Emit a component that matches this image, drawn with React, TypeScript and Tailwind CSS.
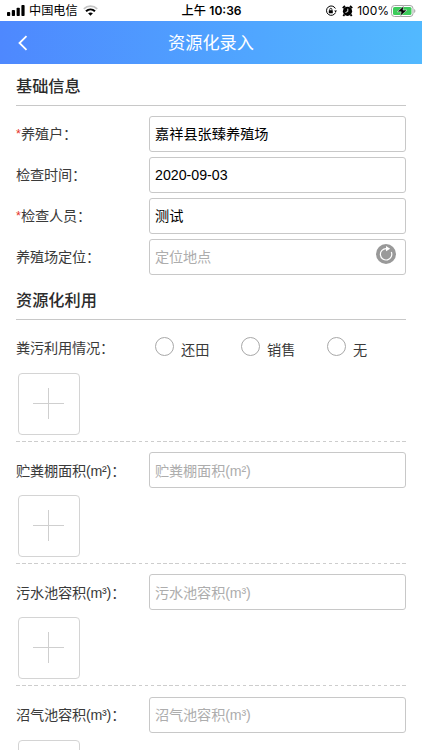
import React from "react";

const uploads = [
  { label: "贮粪棚面积(m²)" },
  { label: "污水池容积(m³)" },
  { label: "沼气池容积(m³)" },
];

function StatusBar() {
  return (
    <div className="flex h-[21px] items-center justify-between pl-[7px] pr-[6px] pt-px text-[12px] text-black">
      <div className="flex w-[150px] items-center">
        <svg width="18" height="11" viewBox="0 0 18 11" fill="#000">
          <rect x="0" y="7" width="3.2" height="4" rx="0.8" />
          <rect x="4.8" y="5" width="3.2" height="6" rx="0.8" />
          <rect x="9.6" y="2.7" width="3.2" height="8.3" rx="0.8" />
          <rect x="14.4" y="0" width="3.2" height="11" rx="0.8" />
        </svg>
        <span className="ml-[4px] pt-px text-[12.2px]">中国电信</span>
        <svg className="ml-[5px]" width="15" height="11" viewBox="0 0 15 11" fill="none">
          <path d="M0.8 3.8C4.6 0.2 10.4 0.2 14.2 3.8" stroke="#c4c4c4" strokeWidth="1.8" />
          <path d="M3 6.3C5.6 3.9 9.4 3.9 12 6.3" stroke="#000" strokeWidth="2.1" />
          <path d="M5.1 8.3C6.5 7.1 8.5 7.1 9.9 8.3L7.5 10.8Z" fill="#000" />
        </svg>
      </div>
      <span className="pt-px text-[12.2px] font-medium">
        上午 <span className="font-['Inter'] text-[12px] font-semibold">10:36</span>
      </span>
      <div className="flex w-[150px] items-center justify-end">
        <svg width="12" height="12" viewBox="0 0 12 12" fill="none">
          <path d="M10.4 3.5A4.7 4.7 0 1 0 10.5 7.6" stroke="#000" strokeWidth="1" />
          <path d="M9.2 5.4H12L10.6 7.6Z" fill="#000" />
          <rect x="3.8" y="5.2" width="4" height="3.1" rx="0.4" fill="#000" />
          <path d="M4.7 5.5V4.4A1.1 1.1 0 0 1 6.9 4.4V5.5" stroke="#000" strokeWidth="0.8" />
        </svg>
        <svg className="ml-[5px]" width="11" height="12" viewBox="0 0 11 12" fill="none">
          <circle cx="5.5" cy="6.3" r="4.6" fill="#000" />
          <path d="M0.8 3.1L3 1M10.2 3.1L8 1M2.3 9.7L1.3 11M8.7 9.7L9.7 11" stroke="#000" strokeWidth="1.9" />
          <path d="M5.8 3.7V6.5L3.5 7.5" stroke="#fff" strokeWidth="0.9" />
        </svg>
        <span className="ml-[4px] font-['Inter'] text-[12px]">100%</span>
        <svg className="ml-[2px]" width="25" height="12" viewBox="0 0 25 12">
          <rect x="0.5" y="0.5" width="21.5" height="11" rx="3" fill="#fff" stroke="#a5a5a5" />
          <rect x="2" y="2" width="18.5" height="8" rx="1.6" fill="#3ccb5a" />
          <path d="M23.2 4V8C24.8 7.4 24.8 4.6 23.2 4Z" fill="#a5a5a5" />
          <path d="M12.9 0.8L6.2 6.8H10.2L9.2 11.2L16 5.1H12Z" fill="#000" stroke="#fff" strokeWidth="0.5" />
        </svg>
      </div>
    </div>
  );
}

function Heading({ children }: { children: React.ReactNode }) {
  return (
    <h2 className="flex h-[42px] items-center border-b border-[#c8c8c8] pt-[4px] text-[16.2px] font-medium text-[#2b2b2b]">
      {children}
    </h2>
  );
}

function Row({ label, required, children }: { label: string; required?: boolean; children: React.ReactNode }) {
  return (
    <div className="flex h-9 items-center">
      <div className="flex w-[133px] shrink-0 items-center whitespace-nowrap pt-[2px] text-[14.2px] tracking-[-0.2px] text-[#3a3a3a]">
        {required && <span className="w-[5px] pb-px text-[12.5px] text-[#e5332a]">*</span>}
        <span>{label}：</span>
      </div>
      {children}
    </div>
  );
}

function Field({ value, placeholder, children }: { value?: string; placeholder?: string; children?: React.ReactNode }) {
  return (
    <div className="flex h-9 min-w-0 flex-1 items-center justify-between rounded-[3px] border border-[#c8c8c8] pl-[5px] pr-[9px] text-[14.2px] text-black">
      {value ? (
        <span className="pt-[2px]">{value}</span>
      ) : (
        <span className="pt-[2px] tracking-[-0.15px] text-[#adadad]">{placeholder}</span>
      )}
      {children}
    </div>
  );
}

function UploadBox() {
  return (
    <div className="ml-[2px] mt-[7px] flex size-[62px] items-center justify-center rounded-[4px] border border-[#d4d4d4]">
      <svg width="32" height="32" viewBox="0 0 32 32" stroke="#cfcfcf">
        <path d="M15.5 0V31M0 15.5H31" />
      </svg>
    </div>
  );
}

function DashedLine() {
  return (
    <div className="mt-[6px] h-px bg-[repeating-linear-gradient(90deg,#cdcdcd_0_3.6px,transparent_3.6px_6.13px)]" />
  );
}

function Radio({ label }: { label: string }) {
  return (
    <div className="flex w-[86px] items-center">
      <span className="mb-[3px] size-[19px] rounded-full border border-[#a8a8a8]" />
      <span className="ml-[7px] mt-[5px] text-[14.2px] text-[#3a3a3a]">{label}</span>
    </div>
  );
}

export default function App() {
  return (
    <div className="h-[750px] overflow-hidden bg-white font-['Liberation_Sans','Noto_Sans_CJK_SC',sans-serif]">
      <StatusBar />
      <header className="grid h-[43px] grid-cols-[42px_1fr_42px] items-center bg-linear-to-r from-[#4e88fe] to-[#52b9ff] text-white">
        <svg className="ml-[18px]" width="10" height="16" viewBox="0 0 10 16" fill="none" stroke="#fff" strokeWidth="1.8">
          <path d="M8.5 1.2L1.5 8L8.5 14.8" />
        </svg>
        <h1 className="pt-[3px] text-center text-[17.2px]">资源化录入</h1>
      </header>
      <main className="px-4">
        <Heading>基础信息</Heading>
        <div className="mt-[10px] flex flex-col gap-[5px]">
          <Row label="养殖户" required><Field value="嘉祥县张臻养殖场" /></Row>
          <Row label="检查时间"><Field value="2020-09-03" /></Row>
          <Row label="检查人员" required><Field value="测试" /></Row>
          <Row label="养殖场定位">
            <Field placeholder="定位地点">
              <svg className="mb-[6px]" width="20" height="20" viewBox="0 0 20 20" fill="none">
                <circle cx="10" cy="10" r="10" fill="#999" />
                <path d="M15.3 8A5.7 5.7 0 1 1 10.4 4.6" stroke="#fff" strokeWidth="1.2" />
                <path d="M10 2L14.2 4.7L10 7.2Z" fill="#fff" />
              </svg>
            </Field>
          </Row>
        </div>
        <div className="mt-[3px]"><Heading>资源化利用</Heading></div>
        <div className="mt-[10px]">
          <Row label="粪污利用情况">
            <div className="flex pl-[6px]">
              <Radio label="还田" />
              <Radio label="销售" />
              <Radio label="无" />
            </div>
          </Row>
          <UploadBox />
          <DashedLine />
        </div>
        {uploads.map((item) => (
          <div key={item.label} className="mt-[10.2px]">
            <Row label={item.label}><Field placeholder={item.label} /></Row>
            <UploadBox />
            <DashedLine />
          </div>
        ))}
      </main>
    </div>
  );
}
